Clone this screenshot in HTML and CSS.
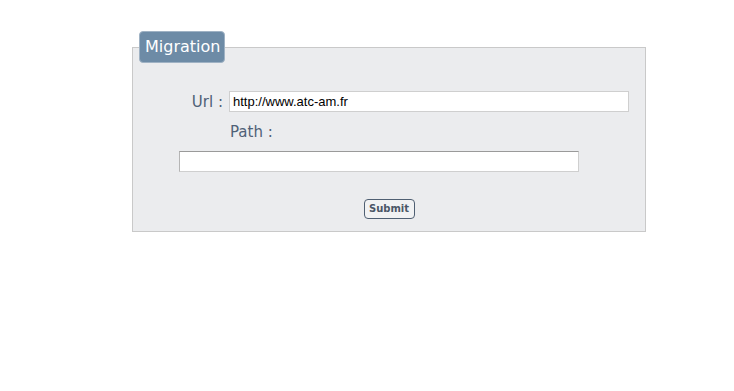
FILE: index.html
```html
<!DOCTYPE html>
<html lang="en">
<head>
    <meta charset="UTF-8">
    <title>Migration</title>
    <link rel="stylesheet" href="styles.css">
</head>
<body>

    <form class="migration-form">
        <fieldset class="migration-box">
            <legend>Migration</legend>

            <div class="url-row">
                <label for="url">Url :</label>
                <input type="text" id="url" class="field" value="http://www.atc-am.fr">
            </div>

            <div class="path-label">
                <label for="path">Path :</label>
            </div>

            <div class="path-row">
                <input type="text" id="path" class="field path-field" value="">
            </div>

            <div class="actions">
                <button type="button" class="submit-btn">Submit</button>
            </div>
        </fieldset>
    </form>

</body>
</html>
```

FILE: styles.css
```css
body {
    margin: 8px;
    background-color: #ffffff;
    font-family: "DejaVu Sans", Verdana, sans-serif;
}

.migration-form {
    margin: 23px 0 0 124px;
    width: 514px;
}

.migration-box {
    margin: 0;
    padding: 0 0 12px 0;
    background-color: #ebecee;
    border: 1px solid #c9c9c9;
    box-sizing: border-box;
    width: 514px;
}

.migration-box legend {
    margin-left: 6px;
    padding: 5px 4px 6px 5px;
    background-color: #6d8ba6;
    border: 1px solid #9fb2c4;
    border-radius: 4px;
    color: #ffffff;
    font-family: "DejaVu Sans", Verdana, sans-serif;
    font-size: 16px;
    line-height: 19px;
}

label {
    color: #4f6177;
    font-size: 15px;
}

.url-row {
    display: flex;
    align-items: center;
    margin-top: 28px;
}

.url-row label {
    width: 90px;
    text-align: right;
}

.field {
    box-sizing: border-box;
    width: 400px;
    height: 21px;
    margin: 0;
    padding: 1px 3px;
    background: #ffffff;
    border: 1px solid #cfcfcf;
    font-family: "Liberation Sans", Arial, sans-serif;
    font-size: 13px;
    color: #000000;
}

.url-row .field {
    margin-left: 6px;
}

.path-label {
    margin: 10px 0 0 97px;
    height: 20px;
    line-height: 20px;
}

.path-row {
    margin: 9px 0 0 46px;
}

.path-field {
    border-top-color: #9a9a9a;
    border-left-color: #b5b5b5;
}

.actions {
    margin-top: 25px;
    text-align: center;
}

.submit-btn {
    width: 51px;
    height: 20px;
    padding: 0;
    background-color: #f1f2f3;
    border: 1px solid #4f5f72;
    border-radius: 4px;
    color: #4b5767;
    font-family: "DejaVu Sans", Verdana, sans-serif;
    font-size: 10px;
    font-weight: bold;
}
```
